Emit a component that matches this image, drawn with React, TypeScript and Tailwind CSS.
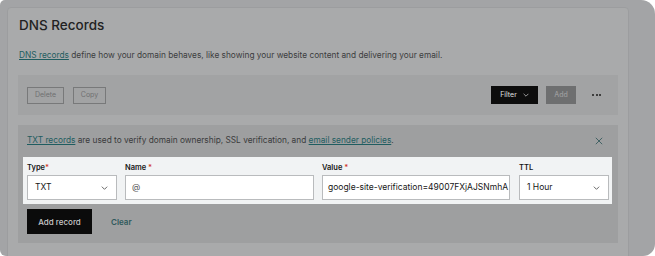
import React from 'react';

const Chevron = ({ className }: { className?: string }) => (
  <svg viewBox="0 0 10 6" className={className} fill="none" stroke="currentColor" strokeWidth="1.1">
    <path d="M1 1l4 4 4-4" />
  </svg>
);

const Req = () => <span className="text-[#d23b30]">*</span>;

const App = () => {
  return (
    <div className="w-[655px] h-[256px] bg-white overflow-hidden font-['Inter',sans-serif]">
      <div className="w-full h-full bg-[#a3a4a6] rounded-tl-[5px] rounded-tr-[14px] rounded-bl-[6px] rounded-br-[12px] pt-[7px] pl-[7px] overflow-hidden">
        <div className="w-[622px] h-[250px] bg-[#a9aaab] border border-[#9c9d9f] rounded-t-[4px] px-[10px]">
          {/* Header */}
          <h1 className="mt-[7px] ml-[1px] text-[13.5px] font-medium text-[#222] leading-[20px]">DNS Records</h1>
          <p className="mt-[14px] ml-[1px] text-[8.3px] text-[#3c3d3e] leading-[12px]">
            <span className="text-[#1f5d60] underline">DNS records</span> define how your domain behaves, like showing your website content and delivering your email.
          </p>

          {/* Toolbar */}
          <div className="mt-[14px] h-[40px] bg-[#a2a3a4] flex items-center pl-[9px] pr-[17px]">
            <div className="flex gap-[9px]">
              <button className="w-[37px] h-[17px] border border-[#78797a] text-[7px] text-[#6f7071]">Delete</button>
              <button className="w-[33px] h-[17px] border border-[#78797a] text-[7px] text-[#6f7071]">Copy</button>
            </div>
            <div className="ml-auto flex items-center">
              <button className="w-[47px] h-[18px] bg-[#0d0d0d] text-[#e0e0e0] text-[7px] flex items-center justify-center gap-[6px]">
                Filter <Chevron className="w-[6px] h-[4px]" />
              </button>
              <button className="ml-[8px] w-[30px] h-[18px] bg-[#6e6f70] text-[#9c9d9e] text-[7px] font-medium">Add</button>
              <div className="ml-[16px] flex gap-[1.5px]">
                <span className="w-[2px] h-[2px] rounded-full bg-[#1c1c1c]" />
                <span className="w-[2px] h-[2px] rounded-full bg-[#1c1c1c]" />
                <span className="w-[2px] h-[2px] rounded-full bg-[#1c1c1c]" />
              </div>
            </div>
          </div>

          {/* TXT panel */}
          <div className="mt-[10px] h-[118px] bg-[#9e9fa0] pt-[10px] pl-[5px] pr-[6px]">
            <div className="flex items-center pl-[4px] pr-[9px] h-[11px]">
              <p className="text-[8.3px] text-[#3a3b3c]">
                <span className="text-[#1f5d60] underline">TXT records</span> are used to verify domain ownership, SSL verification, and{' '}
                <span className="text-[#1f5d60] underline">email sender policies</span>.
              </p>
              <svg viewBox="0 0 10 10" className="ml-auto w-[8px] h-[8px] text-[#3f6062]" stroke="currentColor" strokeWidth="1.2">
                <path d="M1 1l8 8M9 1l-8 8" />
              </svg>
            </div>

            <div className="mt-[11px] h-[47px] bg-[#f1f3f4] pl-[4px] pr-[3px] pt-[5px] flex gap-[8px] text-[#161616]">
              <div className="w-[90px]">
                <div className="text-[7.5px] font-semibold leading-[12px]">Type<Req /></div>
                <div className="mt-[1px] h-[25px] bg-white border border-[#b9bbbd] flex items-center pl-[7px] pr-[8px] text-[8.5px]">
                  TXT
                  <Chevron className="ml-auto w-[7px] h-[4px] text-[#333]" />
                </div>
              </div>
              <div className="w-[189px]">
                <div className="text-[7.5px] font-semibold leading-[12px]">Name <Req /></div>
                <div className="mt-[1px] h-[25px] bg-white border border-[#b9bbbd] flex items-center pl-[6px] text-[8.5px] text-[#555]">@</div>
              </div>
              <div className="w-[188px]">
                <div className="text-[7.5px] font-semibold leading-[12px]">Value <Req /></div>
                <div className="mt-[1px] h-[25px] bg-white border border-[#b9bbbd] flex items-center pl-[5px] text-[8.5px] overflow-hidden whitespace-nowrap">
                  google-site-verification=49007FXjAJSNmhA
                </div>
              </div>
              <div className="ml-[1px] w-[90px]">
                <div className="text-[7.5px] font-semibold leading-[12px]">TTL</div>
                <div className="mt-[1px] h-[25px] bg-white border border-[#b9bbbd] flex items-center pl-[7px] pr-[8px] text-[8.5px]">
                  1 Hour
                  <Chevron className="ml-auto w-[7px] h-[4px] text-[#333]" />
                </div>
              </div>
            </div>

            <div className="mt-[5px] pl-[4px] flex items-center">
              <button className="w-[65px] h-[25px] bg-[#0b0b0b] text-[#c8c8c8] text-[8px] font-medium">Add record</button>
              <span className="ml-[19px] text-[8px] font-semibold text-[#2f5a5c]">Clear</span>
            </div>
          </div>
        </div>
      </div>
    </div>
  );
};

export default App;
